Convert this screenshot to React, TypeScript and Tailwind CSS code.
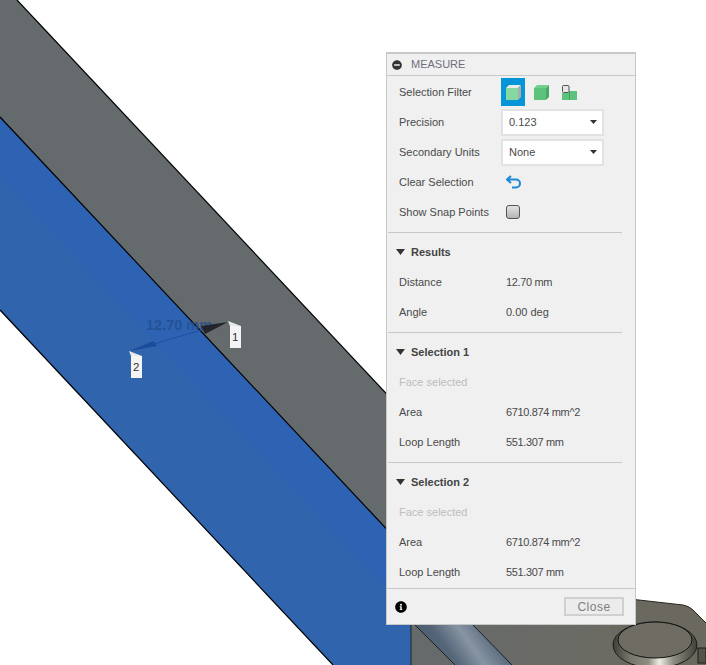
import React from "react";
import { FaInfoCircle, FaMinusCircle } from "react-icons/fa";

const Row = ({ label, muted, children }: { label: string; muted?: boolean; children?: React.ReactNode }) => (
  <div className="flex h-[30px] shrink-0 items-center pl-3">
    <div className={"w-[107px] shrink-0 " + (muted ? "text-[#bdbdbd]" : "text-[#4a4a4a]")}>{label}</div>
    {children}
  </div>
);

const Value = ({ tight, children }: { tight?: boolean; children: React.ReactNode }) => (
  <div className={"text-[#4a4a4a] " + (tight ? "tracking-[-0.35px]" : "")}>{children}</div>
);

const Section = ({ title }: { title: string }) => (
  <div className="flex h-[34px] shrink-0 items-center pt-[4px] pl-[9px]">
    <svg width="9" height="6" viewBox="0 0 9 6" className="mr-[6px]">
      <path d="M0 0h9L4.5 6z" fill="#333" />
    </svg>
    <div className="font-bold text-[#444]">{title}</div>
  </div>
);

const Divider = () => <div className="mr-[13px] ml-px h-px shrink-0 bg-[#c8c8c8]" />;

const Select = ({ value }: { value: string }) => (
  <div className="flex h-[27px] w-[103px] items-center justify-between border-2 border-[#e2e2e2] bg-white pr-[5px] pl-[6px] text-[#4a4a4a]">
    {value}
    <svg width="7" height="4" viewBox="0 0 7 4">
      <path d="M0 0h7L3.5 4z" fill="#333" />
    </svg>
  </div>
);

const Scene = () => (
  <svg width="706" height="665" viewBox="0 0 706 665" className="absolute inset-0">
    <defs>
      <linearGradient id="tube" gradientUnits="userSpaceOnUse" x1="425" y1="665" x2="490" y2="620">
        <stop offset="0" stopColor="#46566a" />
        <stop offset="0.35" stopColor="#566679" />
        <stop offset="0.62" stopColor="#8794a3" />
        <stop offset="1" stopColor="#4a5b70" />
      </linearGradient>
      <linearGradient id="floor" x1="0" y1="0" x2="1" y2="0">
        <stop offset="0" stopColor="#666a6b" />
        <stop offset="1" stopColor="#6c6b62" />
      </linearGradient>
      <linearGradient id="ring" x1="0" y1="0" x2="1" y2="0">
        <stop offset="0" stopColor="#3f3f39" />
        <stop offset="0.2" stopColor="#77756b" />
        <stop offset="0.42" stopColor="#8f8d82" />
        <stop offset="0.55" stopColor="#efeee6" />
        <stop offset="0.72" stopColor="#8f8d82" />
        <stop offset="1" stopColor="#3f3f39" />
      </linearGradient>
    </defs>
    {/* long gray face */}
    <polygon points="17,0 640,664 640,665 411,665 411,556 0,117 0,0" fill="#656a6c" />
    <line x1="17" y1="0" x2="640" y2="664" stroke="#000" strokeWidth="1.2" />
    {/* blue selected face */}
    <polygon points="0,117 411,555 411,665 333,665 0,310" fill="#2e63b4" />
    <polygon points="0,177 411,615 411,665 333,665 0,310" fill="#3064ac" />
    <line x1="0" y1="117" x2="411" y2="555" stroke="#000" strokeWidth="1.2" />
    <line x1="0" y1="310" x2="333" y2="665" stroke="#000" strokeWidth="1.2" />
    <line x1="411" y1="600" x2="411" y2="665" stroke="#222" strokeWidth="1" />
    {/* base plate */}
    <polygon points="412,620 640,620 640,665 412,665" fill="url(#floor)" />
    <polygon points="415,625 473,625 512,665 455,665" fill="url(#tube)" />
    <line x1="415" y1="625" x2="455" y2="665" stroke="#1a1f28" strokeWidth="1" />
    <line x1="473" y1="625" x2="512" y2="665" stroke="#1a1f28" strokeWidth="1" />
    <path d="M630 599 L683 605 Q689 606 693 610 L706 623 V665 H620 L610 625Z" fill="#6b695f" />
    <path d="M630 599 L683 605 Q689 606 693 610 L706 623" fill="none" stroke="#26261f" strokeWidth="1" />
    {/* button */}
    <rect x="698" y="648" width="8" height="15" fill="#55544c" stroke="#1c1c18" />
    <ellipse cx="655" cy="645" rx="42" ry="23" fill="url(#ring)" stroke="#1c1c18" strokeWidth="1" />
    <ellipse cx="655" cy="640" rx="37" ry="18" fill="#6f6d63" stroke="#111" strokeWidth="1" />
    {/* measure annotation */}
    <text x="146" y="330" fontFamily="Liberation Sans, sans-serif" fontSize="14.5" fontWeight="700" fill="#234f90" fillOpacity="0.85">
      12.70 mm
    </text>
    <line x1="150" y1="345" x2="205" y2="329" stroke="#1d4f9f" strokeWidth="1" />
    <polygon points="228,322 201,326 205,334" fill="#22262c" />
    <polygon points="130,351 153,341 157,346" fill="#1a4c9e" />
    <polygon points="228,321 241,326 230,326" fill="#e9e9e9" />
    <rect x="230" y="326" width="11" height="22" fill="#f4f4f4" />
    <text x="232" y="341" fontFamily="Liberation Sans, sans-serif" fontSize="11.5" fill="#333">1</text>
    <polygon points="129,351 142,356 131,356" fill="#e9e9e9" />
    <rect x="131" y="356" width="11" height="22" fill="#f4f4f4" />
    <text x="133" y="371" fontFamily="Liberation Sans, sans-serif" fontSize="11.5" fill="#333">2</text>
  </svg>
);

const FilterIcons = () => (
  <div className="flex items-center">
    <div className="flex h-[28px] w-[24px] items-center justify-center bg-[#0696d7]">
      <svg width="15" height="15" viewBox="0 0 15 15">
        <polygon points="3,0 15,0 12,3 0,3" fill="#e8eeea" />
        <polygon points="12,3 15,0 15,12 12,15" fill="#a9adb0" />
        <rect x="0" y="3" width="12" height="12" fill="#85d9a0" />
      </svg>
    </div>
    <svg width="15" height="15" viewBox="0 0 15 15" className="ml-[9px]">
      <polygon points="3,0 15,0 12,3 0,3" fill="#72cf90" />
      <polygon points="12,3 15,0 15,12 12,15" fill="#47a865" />
      <rect x="0" y="3" width="12" height="12" fill="#5cc27c" />
    </svg>
    <svg width="15" height="15" viewBox="0 0 15 15" className="ml-[13px]">
      <rect x="0.5" y="0.5" width="6.5" height="7" rx="1" fill="#e6e6e6" stroke="#555" />
      <rect x="0" y="8" width="7" height="7" fill="#5cc27c" />
      <rect x="8" y="6" width="7" height="9" fill="#5cc27c" />
      <rect x="7" y="6" width="1" height="9" fill="#3ea35f" />
    </svg>
  </div>
);

export default function App() {
  return (
    <div className="relative h-[665px] w-[706px] overflow-hidden bg-white font-['Liberation_Sans',sans-serif] text-[11px]">
      <Scene />
      <div className="absolute top-[52px] left-[386px] flex h-[573px] w-[250px] flex-col border-t-2 border-r border-b border-l border-[#c8c8c8] bg-[#f0f0f0]">
        <div className="flex h-[22px] shrink-0 items-center border-b border-[#c8c8c8] pl-[5px] text-[#6f6f80]">
          <FaMinusCircle className="mr-[9px] size-[10px] text-[#333]" />
          MEASURE
        </div>
        <div className="h-px shrink-0" />
        <Row label="Selection Filter">
          <div className="-ml-[5px]">
            <FilterIcons />
          </div>
        </Row>
        <Row label="Precision">
          <div className="-ml-[5px]">
            <Select value="0.123" />
          </div>
        </Row>
        <Row label="Secondary Units">
          <div className="-ml-[5px]">
            <Select value="None" />
          </div>
        </Row>
        <Row label="Clear Selection">
          <svg width="16" height="14" viewBox="0 0 16 14">
            <path d="M5 1 1 4.5 5 8M1.5 4.5H10a4 4 0 0 1 0 8H6" fill="none" stroke="#1e88d8" strokeWidth="2" />
          </svg>
        </Row>
        <Row label="Show Snap Points">
          <div className="size-[14px] rounded-[3px] border border-[#555] bg-gradient-to-b from-[#e4e4e4] to-[#b4b4b4]" />
        </Row>
        <div className="h-[5px] shrink-0" />
        <Divider />
        <Section title="Results" />
        <Row label="Distance">
          <Value tight>12.70 mm</Value>
        </Row>
        <Row label="Angle">
          <Value>0.00 deg</Value>
        </Row>
        <div className="h-[5px] shrink-0" />
        <Divider />
        <Section title="Selection 1" />
        <Row label="Face selected" muted />
        <Row label="Area">
          <Value tight>6710.874 mm^2</Value>
        </Row>
        <Row label="Loop Length">
          <Value tight>551.307 mm</Value>
        </Row>
        <div className="h-[5px] shrink-0" />
        <Divider />
        <Section title="Selection 2" />
        <Row label="Face selected" muted />
        <Row label="Area">
          <Value tight>6710.874 mm^2</Value>
        </Row>
        <Row label="Loop Length">
          <Value tight>551.307 mm</Value>
        </Row>
        <div className="h-px shrink-0" />
        <div className="flex grow items-center justify-between border-t border-[#c8c8c8] pr-[11px] pl-2">
          <FaInfoCircle className="size-3 text-black" />
          <div className="flex h-[19px] w-[60px] items-center justify-center border-2 border-[#d0d0d0] bg-[#ececec] text-[12px] tracking-[0.5px] text-[#808080]">
            Close
          </div>
        </div>
      </div>
    </div>
  );
}
